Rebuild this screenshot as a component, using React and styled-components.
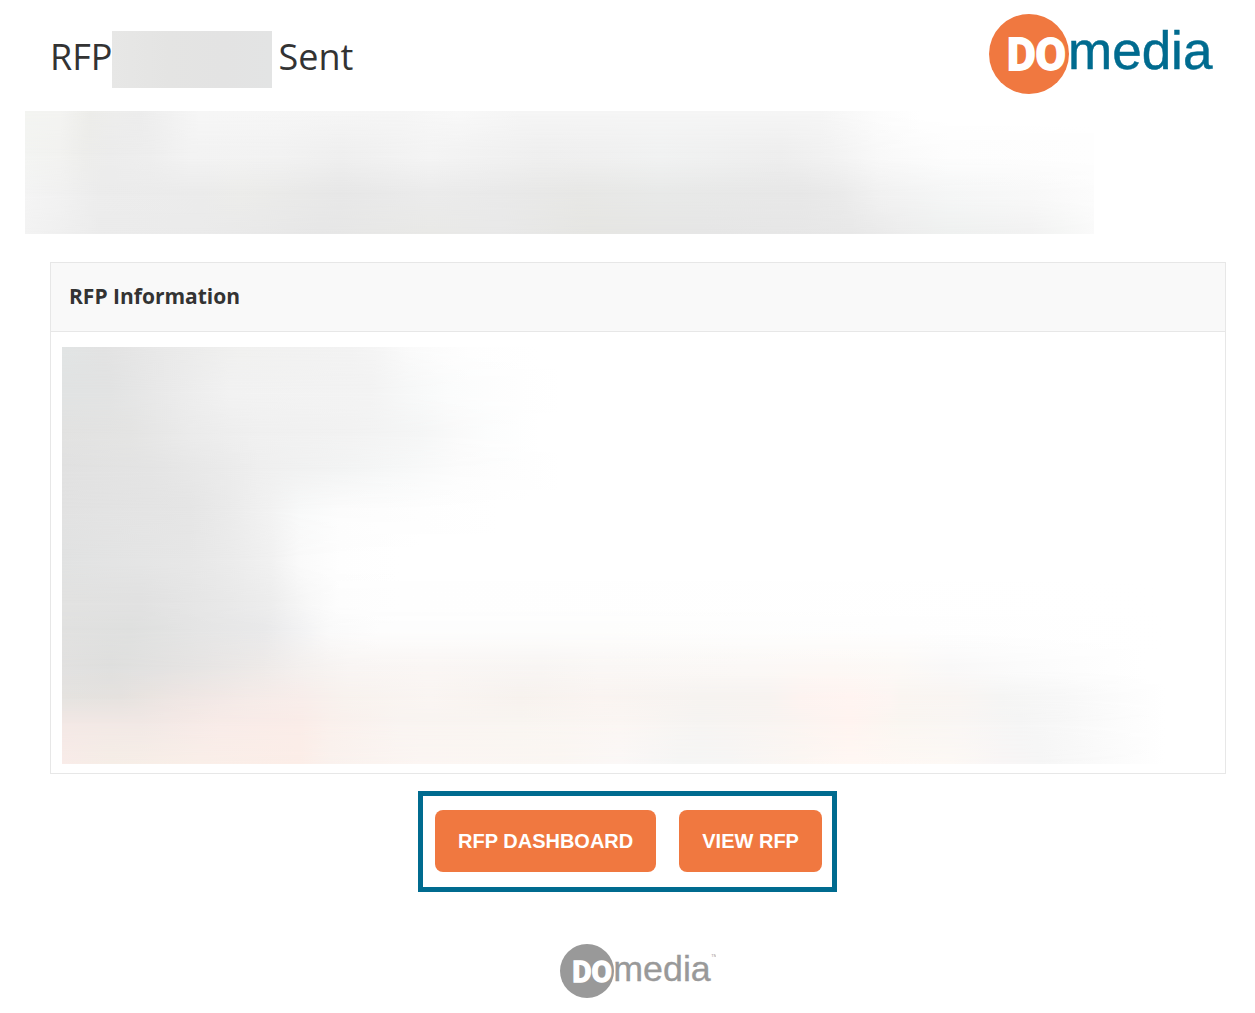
import React from 'react'
import styled, { createGlobalStyle } from 'styled-components'

const GlobalStyle = createGlobalStyle`
    * {
        box-sizing: border-box;
    }

    body {
        margin: 0;
        background: #fff;
        color: #333;
        font-family: "Open Sans", "Noto Sans", sans-serif;
    }
`

const Header = styled.header`
    display: flex;
    align-items: flex-start;
    justify-content: space-between;
    padding: 14px 42px 17px 50px;
`

const Title = styled.h1`
    display: flex;
    align-items: flex-start;
    margin: 14px 0 0;
    font-size: 36px;
    line-height: 58px;
    font-weight: 400;
`

const HiddenName = styled.span`
    width: 160px;
    height: 57px;
    margin: 3px 6px 0 0;
    background: linear-gradient(90deg, #e7e7e6, #e4e4e3 35%, #e3e3e3 70%, #e3e4e4);
`

const Blurred = styled.div`
    display: grid;
    height: ${({ $height }) => $height}px;
`

const BlurRow = styled.div`
    grid-area: 1 / 1;
`

const Banner = styled.section`
    margin: 0 161px 0 25px;
`

const Panel = styled.section`
    margin: 28px 29px 17px 50px;
    border: 1px solid #e7e7e7;
`

const PanelTitle = styled.h2`
    margin: 0;
    padding: 0 18px 2px;
    border-bottom: 1px solid #e7e7e7;
    background: #f9f9f9;
    font-size: 21px;
    line-height: 66px;
    font-weight: 700;
`

const PanelBody = styled.div`
    padding: 15px 60px 9px 11px;
`

const Actions = styled.div`
    display: flex;
    gap: 23px;
    width: fit-content;
    margin: 0 auto;
    padding: 14px 10px 15px 12px;
    border: 5px solid #006b8f;
`

const Button = styled.button`
    height: 62px;
    padding: 0 23px;
    border: 0;
    border-radius: 8px;
    background: #f07840;
    color: #fff;
    font-family: "Liberation Sans", Arial, sans-serif;
    font-size: 20px;
    font-weight: 700;
    text-transform: uppercase;
    cursor: pointer;
`

const Footer = styled.footer`
    display: flex;
    justify-content: center;
    padding: 52px 29px 15px 50px;
`

const LogoSvg = styled.svg`
    display: block;
    height: ${({ $height }) => $height}px;

    .do {
        font: 700 44px "Roboto", sans-serif;
    }

    .media {
        font: 400 53px "Liberation Sans", Arial, sans-serif;
    }

    .tm {
        font: 400 6px "Liberation Sans", Arial, sans-serif;
    }
`

const Logo = ({ height, circle, text, trademark }) => (
    <LogoSvg
        $height={height}
        viewBox={trademark ? '0 0 232 80' : '0 0 224 80'}
        role="img"
        aria-label="DOmedia"
    >
        <circle cx="40" cy="40" r="40" fill={circle} />
        <text className="do" x="18" y="56" fill="#fff" stroke="#fff" strokeWidth="2">DO</text>
        <text className="media" x="79" y="55" fill={text} stroke={text} strokeWidth="0.5">media</text>
        {trademark && <text className="tm" x="224" y="20" fill={text}>TM</text>}
    </LogoSvg>
)

// every row: [y, [x, color], [x, color], ...], blended from one row to the next
const bannerRows = [
    [0, [0, '#f3f4f1'], [35, '#f3f3f1'], [65, '#ecece9'], [90, '#ededec'], [115, '#ececec'], [145, '#f1f1f1'], [175, '#f6f6f6'], [375, '#f5f5f5'], [435, '#f8f8f8'], [495, '#f5f5f5'], [795, '#f5f5f5'], [855, '#fcfcfc'], [895, '#fff'], [1069, '#fff']],
    [44, [0, '#f3f4f2'], [35, '#f2f2f0'], [60, '#ededeb'], [85, '#ececec'], [125, '#eee'], [165, '#f3f3f3'], [255, '#f2f2f2'], [315, '#efefef'], [405, '#f4f4f4'], [515, '#efefef'], [575, '#f0f0f0'], [635, '#f1f2f2'], [755, '#eee'], [805, '#f2f2f2'], [855, '#f9f9f9'], [925, '#fdfdfd'], [1069, '#fefefe']],
    [84, [0, '#f4f4f4'], [35, '#f1f1f1'], [75, '#ececec'], [175, '#ebebeb'], [215, '#ececea'], [315, '#e7e7e7'], [405, '#ebebeb'], [475, '#e9e9e9'], [555, '#e7e7e5'], [635, '#e8e9e8'], [775, '#e7e7e7'], [815, '#eaeaea'], [855, '#f1f1f1'], [925, '#f5f6f6'], [1005, '#f8f8f8'], [1069, '#fcfcfc']],
    [123, [0, '#f3f3f3'], [35, '#f0f0f0'], [75, '#ececec'], [175, '#ebebeb'], [295, '#e7e7e7'], [405, '#e9e9e7'], [475, '#e9e9e9'], [565, '#e6e6e3'], [675, '#e6e6e6'], [825, '#e8e8e8'], [875, '#ededed'], [925, '#eff1f0'], [1005, '#f2f2f2'], [1035, '#f5f6f5'], [1069, '#fafafa']],
]

const infoRows = [
    [0, [0, '#e1e4e4'], [43, '#e2e2e2'], [98, '#e8e8e8'], [178, '#f0f0ef'], [288, '#f2f2f2'], [318, '#f5f5f5'], [348, '#fafafa'], [408, '#fefefe'], [478, '#fff']],
    [44, [0, '#e1e3e3'], [48, '#e2e3e3'], [98, '#e9e9e9'], [168, '#f2f2f2'], [308, '#f3f3f3'], [348, '#f7f8f8'], [388, '#fbfcfc'], [458, '#fefefe'], [498, '#fff']],
    [88, [0, '#e2e2e1'], [68, '#e4e4e3'], [128, '#ebebeb'], [198, '#f0f0f0'], [288, '#f2f2f2'], [358, '#f5f6f6'], [398, '#fafafa'], [428, '#fcfdfd'], [478, '#fff']],
    [123, [0, '#e1e1e1'], [88, '#e4e4e4'], [158, '#eaeaea'], [198, '#efefef'], [278, '#f3f4f4'], [338, '#f7f8f8'], [398, '#fcfcfc'], [468, '#fefefe'], [498, '#fff']],
    [163, [0, '#e2e2e2'], [128, '#e5e5e5'], [168, '#ebebeb'], [208, '#f2f2f2'], [238, '#f8f9f9'], [278, '#fcfcfc'], [358, '#fefefe'], [438, '#fff']],
    [212, [0, '#e1e2e2'], [128, '#e7e7e7'], [168, '#ebebeb'], [208, '#f1f1f1'], [238, '#fafafa'], [278, '#fefefe'], [338, '#fff']],
    [256, [0, '#e2e2e1'], [78, '#e1e1e1'], [158, '#e8e8e8'], [208, '#ededed'], [248, '#f8f8f8'], [278, '#fdfdfd'], [338, '#fefefe'], [1103, '#fff']],
    [283, [0, '#e1e1e0'], [68, '#dfe0df'], [138, '#e5e5e5'], [203, '#e9e9ea'], [238, '#f2f2f3'], [268, '#fafafa'], [318, '#fdfdfd'], [538, '#fdfdfc'], [838, '#fefefe'], [1103, '#fff']],
    [322, [0, '#e2e1e0'], [48, '#dfdfde'], [128, '#e6e4e3'], [198, '#eeeae8'], [238, '#f4f0ee'], [288, '#f9f5f3'], [368, '#faf6f4'], [478, '#f8f5f3'], [538, '#faf7f5'], [688, '#fbf8f6'], [768, '#fdf8f5'], [838, '#fcf9f6'], [888, '#f9f8f8'], [958, '#fbfbfb'], [1018, '#fdfdfd'], [1083, '#fff']],
    [352, [0, '#e5e3e0'], [58, '#e6e2df'], [118, '#efe6e3'], [188, '#f5ebe8'], [238, '#f8edea'], [283, '#f8f2ee'], [368, '#faf5f2'], [458, '#f7f2ee'], [538, '#faf4f1'], [638, '#f6f3f0'], [708, '#f7f3f0'], [738, '#fdf3f0'], [788, '#fff4f1'], [828, '#fdf5f2'], [838, '#faf5f1'], [898, '#f9f5f2'], [938, '#f5f5f4'], [998, '#f7f7f7'], [1048, '#fbfbfb'], [1103, '#fff']],
    [376, [0, '#f3e8e5'], [78, '#f1e8e5'], [158, '#f8ebe8'], [238, '#faece8'], [268, '#faf0ec'], [338, '#f9f4f1'], [458, '#f9f5f1'], [558, '#fbf6f3'], [638, '#f6f4f2'], [718, '#f9f4f1'], [788, '#fff4f0'], [838, '#faf6f1'], [898, '#f9f6f4'], [958, '#f5f5f5'], [1008, '#f8f8f8'], [1058, '#fcfcfc'], [1103, '#fff']],
    [417, [0, '#f9ece9'], [48, '#f6eee7'], [138, '#faefe9'], [238, '#fceee8'], [268, '#faf2ee'], [358, '#fcf6f3'], [498, '#fbf7f3'], [558, '#fbf8f7'], [618, '#f6f6f5'], [668, '#f7f6f5'], [738, '#fcf7f3'], [788, '#fff8f4'], [888, '#fdf9f5'], [938, '#f9f6f6'], [978, '#f6f6f6'], [1048, '#fbfbfb'], [1103, '#fff']],
]

const BlurredContent = ({ rows, width, height }) => (
    <Blurred $height={height} aria-hidden="true">
        {rows.map(([y, ...stops], i) => {
            const next = rows[i + 1]
            const colors = stops.map(([x, color]) => `${color} ${(x / width) * 100}%`).join(', ')
            const fade = next ? `linear-gradient(#000 ${y}px, transparent ${next[0]}px)` : 'none'

            return (
                <BlurRow
                    key={y}
                    style={{
                        background: `linear-gradient(90deg, ${colors})`,
                        maskImage: fade,
                        zIndex: rows.length - i,
                    }}
                />
            )
        })}
    </Blurred>
)

const App = () => {
  return (
    <>
    <GlobalStyle />
    <Header>
        <Title>
            RFP
            <HiddenName />
            Sent
        </Title>
        <Logo height={80} circle="#f07840" text="#006b8f" />
    </Header>

    <main>
        <Banner>
            <BlurredContent rows={bannerRows} width={1069} height={123} />
        </Banner>

        <Panel>
            <PanelTitle>RFP Information</PanelTitle>
            <PanelBody>
                <BlurredContent rows={infoRows} width={1103} height={417} />
            </PanelBody>
        </Panel>

        <Actions>
            <Button type="button">RFP Dashboard</Button>
            <Button type="button">View RFP</Button>
        </Actions>
    </main>

    <Footer>
        <Logo height={54} circle="#999" text="#999" trademark />
    </Footer>
    </>
  )
}

export default App
